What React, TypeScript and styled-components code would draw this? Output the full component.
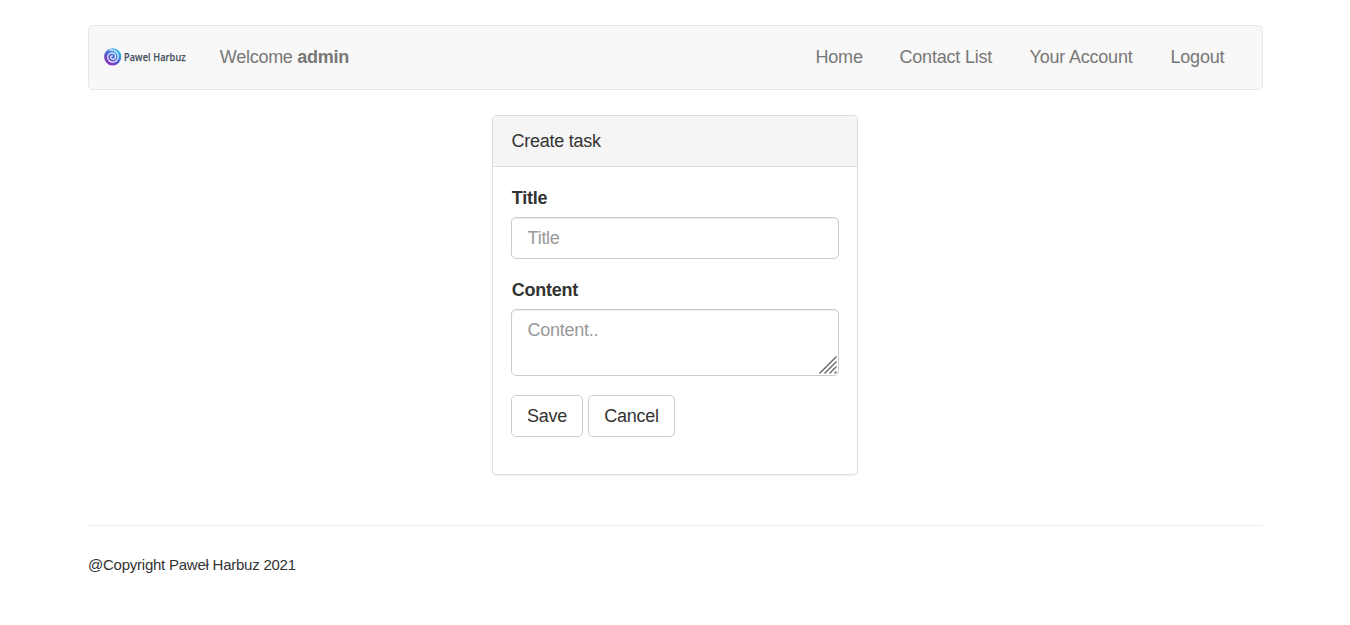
import React from "react";
import styled, { createGlobalStyle } from "styled-components";

const GlobalStyle = createGlobalStyle`
  *, *::before, *::after { box-sizing: border-box; }
  body {
    margin: 0;
    background: #fff;
    color: #333;
    font-family: "Liberation Sans", Arial, sans-serif;
    font-size: 18px;
    line-height: 25px;
    letter-spacing: -0.27px;
  }
`;

const Container = styled.div`
  width: 1175px;
  margin: 0 auto 0 88px;
  padding-top: 25px;
`;

const Navbar = styled.nav`
  display: flex;
  align-items: center;
  height: 65px;
  padding: 0 19px 0 15px;
  border: 1px solid #e7e7e7;
  border-radius: 5px;
  background: #f8f8f8;
  color: #777;
`;

const Brand = styled.a`
  display: flex;
  align-items: center;
  width: 115.8px;
  height: 20px;
  margin-bottom: 1px;
  color: #465160;
  text-decoration: none;
`;

const BrandName = styled.span`
  margin: -1px 0 0 1.5px;
  font: 500 10.6px/16px "Noto Sans", "Open Sans", sans-serif;
  -webkit-text-stroke: 0.25px currentColor;
  letter-spacing: 0.2px;
  white-space: nowrap;
  transform: scaleX(0.86);
  transform-origin: left center;
`;

const Welcome = styled.span`
  flex: 1;
  white-space: nowrap;
`;

const Menu = styled.ul`
  display: flex;
  margin: 0;
  padding: 0;
  list-style: none;
`;

const MenuItem = styled.li<{ $width: number }>`
  width: ${(p) => p.$width}px;
  padding-left: 18.5px;
  white-space: nowrap;
  letter-spacing: -0.2px;
`;

const Panel = styled.section`
  width: 366px;
  height: 360px;
  margin: 25px 0 0 404px;
  border: 1px solid #ddd;
  border-radius: 5px;
  background: #fff;
  box-shadow: 0 1px 2px rgba(0, 0, 0, 0.06);
`;

const PanelHeading = styled.header`
  height: 51px;
  padding: 13px 18.6px 12px;
  border-bottom: 1px solid #ddd;
  border-radius: 4px 4px 0 0;
  background: #f5f5f5;
`;

const PanelBody = styled.form`
  padding: 19px 18px;
`;

const Field = styled.div`
  position: relative;
  margin-bottom: 19px;
`;

const Label = styled.label`
  display: block;
  height: 31px;
  padding-left: 0.8px;
  font-weight: 700;
`;

const Control = styled.input<{ $height: number }>`
  display: block;
  width: 328px;
  height: ${(p) => p.$height}px;
  padding: 8px 15.6px 7px;
  border: 1px solid #ccc;
  border-radius: 5px;
  outline: 0;
  background: #fff;
  box-shadow: inset 0 1px 1px rgba(0, 0, 0, 0.075);
  color: #555;
  font: inherit;
  letter-spacing: inherit;
  resize: none;
  &::placeholder { color: #999; opacity: 1; }
`;

const Grip = styled.svg`
  position: absolute;
  right: 1px;
  bottom: 1px;
`;

const Actions = styled.div`
  display: flex;
  gap: 5px;
`;

const Button = styled.button<{ $width: number }>`
  width: ${(p) => p.$width}px;
  height: 42px;
  padding: 0;
  border: 1px solid #ccc;
  border-radius: 5px;
  background: #fff;
  color: #333;
  font: inherit;
  letter-spacing: inherit;
`;

const Footer = styled.footer`
  margin-top: 50px;
  padding-top: 26px;
  border-top: 1px solid #eee;
  font-size: 15px;
  letter-spacing: -0.24px;
`;

const Swirl = () => (
  <svg width="18" height="18" viewBox="0 0 18 18" fill="none">
    <defs>
      <linearGradient id="swirl" x1="14" y1="3" x2="4" y2="16" gradientUnits="userSpaceOnUse">
        <stop stopColor="#28b4ec" />
        <stop offset="0.5" stopColor="#5068d4" />
        <stop offset="1" stopColor="#8c2cbc" />
      </linearGradient>
    </defs>
    <circle cx="8.7" cy="8.8" r="8.6" fill="url(#swirl)" />
    <path
      d="M5.5 2.2C9.8.8 14.4 4.2 14.2 8.8c-.2 3.4-2.9 5.5-5.8 5.3-2.9-.2-4.9-2.4-4.7-5.1.2-2.5 2.2-4.3 4.7-4.1 2.1.2 3.4 1.8 3.2 3.8-.2 1.7-1.5 2.7-3 2.6-1.3-.1-2-1-1.9-2.1.1-.9.8-1.4 1.7-1.3"
      stroke="#eef3fd"
      strokeWidth="1.15"
      strokeLinecap="round"
    />
  </svg>
);

const menu = [
  { label: "Home", width: 84 },
  { label: "Contact List", width: 130 },
  { label: "Your Account", width: 141 },
  { label: "Logout", width: 91 },
];

export default function App() {
  return (
    <>
      <GlobalStyle />
      <Container>
        <Navbar>
          <Brand>
            <Swirl />
            <BrandName>Pawel Harbuz</BrandName>
          </Brand>
          <Welcome>
            Welcome <b>admin</b>
          </Welcome>
          <Menu>
            {menu.map((m) => (
              <MenuItem key={m.label} $width={m.width}>{m.label}</MenuItem>
            ))}
          </Menu>
        </Navbar>
        <Panel>
          <PanelHeading>Create task</PanelHeading>
          <PanelBody>
            <Field>
              <Label htmlFor="title">Title</Label>
              <Control id="title" placeholder="Title" $height={42} />
            </Field>
            <Field>
              <Label htmlFor="content">Content</Label>
              <Control as="textarea" id="content" placeholder="Content.." $height={67} />
              <Grip width="19" height="19" viewBox="0 0 19 19" stroke="#666" strokeWidth="1.4">
                <path d="M.5 17.5l17-17M5.5 17.5l12-12M10.5 17.5l7-7M15.5 17.5l2-2" />
              </Grip>
            </Field>
            <Actions>
              <Button type="button" $width={72}>Save</Button>
              <Button type="button" $width={87}>Cancel</Button>
            </Actions>
          </PanelBody>
        </Panel>
        <Footer>@Copyright Paweł Harbuz 2021</Footer>
      </Container>
    </>
  );
}
